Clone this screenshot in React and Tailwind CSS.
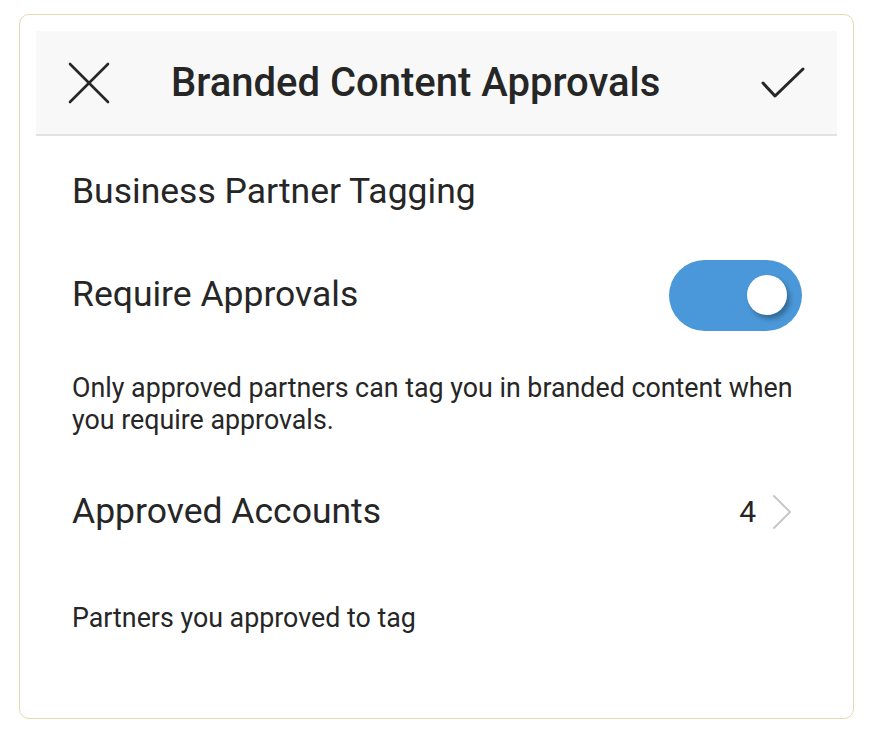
export default function App() {
  return (
    <div className="w-[870px] h-[736px] bg-white overflow-hidden" style={{ fontFamily: 'Roboto, "Noto Sans", sans-serif' }}>
      <div className="ml-[19px] mt-[14px] w-[835px] h-[705px] rounded-[10px] border-[1.5px] border-[#e8d8b2] bg-white px-[16px] pt-[16px] text-[#262626]">
        <div className="h-[105px] bg-[#f8f8f8] border-b-[2px] border-[#e2e2e2] flex items-center">
          <div className="w-[135px] flex items-center pl-[32px]">
            <svg width="42" height="42" viewBox="0 0 42 42" fill="none" stroke="#262626" strokeWidth="2.6" strokeLinecap="round">
              <line x1="2" y1="2" x2="40" y2="40" />
              <line x1="40" y1="2" x2="2" y2="40" />
            </svg>
          </div>
          <div className="flex-1 text-[40px] font-medium leading-none">Branded Content Approvals</div>
          <div className="pr-[32px] flex items-center">
            <svg width="44" height="32" viewBox="0 0 44 32" fill="none" stroke="#262626" strokeWidth="3" strokeLinecap="round" strokeLinejoin="round">
              <polyline points="2,16 14,29 42,2" />
            </svg>
          </div>
        </div>
        <div className="px-[36px]">
          <div className="h-[112px] flex items-center text-[35.5px] leading-none">Business Partner Tagging</div>
          <div className="h-[94px] flex items-center justify-between">
            <div className="text-[35.5px] leading-none">Require Approvals</div>
            <div className="relative w-[133px] h-[71px] rounded-full bg-[#4a98d9] mr-[-1px] mt-[1px]">
              <div className="absolute right-[15px] top-[15px] w-[40px] h-[40px] rounded-full bg-white shadow-[3px_4px_5px_rgba(0,0,0,0.3)]"></div>
            </div>
          </div>
          <div className="pt-[30px] text-[26.8px] leading-[32px]">Only approved partners can tag you in branded content when you require approvals.</div>
          <div className="mt-[34px] h-[84px] flex items-center justify-between">
            <div className="text-[35.5px] leading-none">Approved Accounts</div>
            <div className="flex items-center gap-[16px] mr-[9px]">
              <span className="text-[30px] leading-none">4</span>
              <svg width="20" height="36" viewBox="0 0 20 36" fill="none" stroke="#c8c8c8" strokeWidth="2" strokeLinecap="round" strokeLinejoin="round">
                <polyline points="2,2 18,18 2,34" />
              </svg>
            </div>
          </div>
          <div className="mt-[49px] text-[26.8px] leading-[30px]">Partners you approved to tag</div>
        </div>
      </div>
    </div>
  );
}
